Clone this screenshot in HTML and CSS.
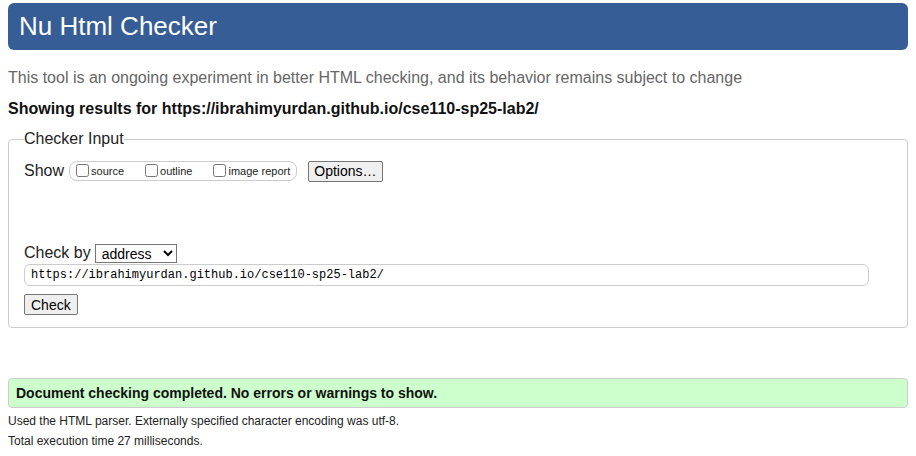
FILE: index.html
```html
<!DOCTYPE html>
<html lang="en">
<head>
<meta charset="utf-8">
<title>Showing results for https://ibrahimyurdan.github.io/cse110-sp25-lab2/ - Nu Html Checker</title>
<link rel="stylesheet" href="styles.css">
</head>
<body>
<h1 class="header">Nu Html Checker</h1>
<p class="desc">This tool is an ongoing experiment in better HTML checking, and its behavior remains subject to change</p>
<p class="showing">Showing results for https://ibrahimyurdan.github.io/cse110-sp25-lab2/</p>
<fieldset class="checker">
  <legend class="legend">Checker Input</legend>
  <div class="show-row">
    <span class="row-label">Show</span>
    <span class="pill">
      <label class="opt"><input type="checkbox" class="cb"><span>source</span></label>
      <label class="opt"><input type="checkbox" class="cb"><span>outline</span></label>
      <label class="opt"><input type="checkbox" class="cb"><span>image report</span></label>
    </span>
    <button type="button" class="btn btn-options">Options…</button>
  </div>
  <div class="checkby-row">
    <span class="row-label">Check by</span>
    <select class="select"><option>address</option></select>
  </div>
  <input class="url" type="text" value="https://ibrahimyurdan.github.io/cse110-sp25-lab2/">
  <div class="submit-row"><button type="button" class="btn btn-check">Check</button></div>
</fieldset>
<p class="success">Document checking completed. No errors or warnings to show.</p>
<p class="details">Used the HTML parser. Externally specified character encoding was utf-8.</p>
<p class="details">Total execution time 27 milliseconds.</p>
</body>
</html>
```
FILE: styles.css
```css
html, body {
  margin: 0;
  padding: 0;
  background: #fff;
}
body {
  padding: 3px 8px 0 8px;
  font-family: "Liberation Sans", Arial, sans-serif;
  color: #000;
}
.header {
  margin: 0;
  height: 47px;
  line-height: 46px;
  background: #365d95;
  color: #fff;
  font-size: 26px;
  font-weight: normal;
  padding-left: 11px;
  border-radius: 6px;
}
.desc {
  margin: 19px 0 0 0;
  font-size: 16px;
  line-height: 18px;
  color: #666;
}
.showing {
  margin: 13px 0 0 0;
  font-size: 16px;
  line-height: 18px;
  font-weight: bold;
  color: #111;
}
.checker {
  margin: 11px 0 0 0;
  padding: 4px 15px 12px 15px;
  border: 1px solid #ccc;
  border-radius: 4px;
}
.legend {
  font-size: 16px;
  line-height: 20px;
  padding: 0;
  margin-left: 0;
  color: #222;
}
.show-row {
  display: flex;
  align-items: center;
  height: 22px;
  margin-top: 7px;
}
.row-label {
  font-size: 16px;
  color: #222;
  margin-right: 4px;
}
.pill {
  display: inline-flex;
  align-items: center;
  height: 18px;
  border: 1px solid #ccc;
  border-radius: 8px;
  padding: 0 6px 0 6px;
  margin-left: 1px;
}
.opt {
  display: inline-flex;
  align-items: center;
  font-size: 11px;
  color: #222;
  margin-right: 21px;
}
.opt:last-child {
  margin-right: 0;
}
.cb {
  width: 13px;
  height: 13px;
  margin: 0 2px 2px 0;
}
.btn {
  font-family: "Liberation Sans", Arial, sans-serif;
  font-size: 14px;
  color: #000;
  background: #efefef;
  border: 1px solid #767676;
  border-radius: 2px;
  padding: 0 7px;
}
.btn-options {
  margin-left: 11px;
  height: 21px;
  padding: 0 5px;
}
.checkby-row {
  display: flex;
  align-items: center;
  margin-top: 60px;
  height: 22px;
}
.select {
  font-family: "Liberation Sans", Arial, sans-serif;
  font-size: 14px;
  width: 82px;
  height: 19px;
  padding: 0 0 0 2px;
  border: 1px solid #767676;
  border-radius: 0;
  background: #fff;
  color: #000;
}
.url {
  display: block;
  box-sizing: border-box;
  width: 845px;
  height: 22px;
  margin-top: 0;
  padding: 0 6px;
  border: 1px solid #ccc;
  border-radius: 6px;
  font-family: "Liberation Mono", "DejaVu Sans Mono", monospace;
  font-size: 12px;
  color: #000;
}
.submit-row {
  margin-top: 8px;
}
.btn-check {
  height: 21px;
  padding: 0 6px;
}
.success {
  margin: 50px 0 0 0;
  height: 30px;
  box-sizing: border-box;
  line-height: 28px;
  padding: 0 7px;
  background: #ccffcc;
  border: 1px solid #ccc;
  border-radius: 4px;
  font-size: 14px;
  font-weight: bold;
  color: #111;
}
.details {
  margin: 0;
  font-size: 12px;
  line-height: 20px;
  color: #222;
}
.success + .details {
  margin-top: 3px;
}
```
